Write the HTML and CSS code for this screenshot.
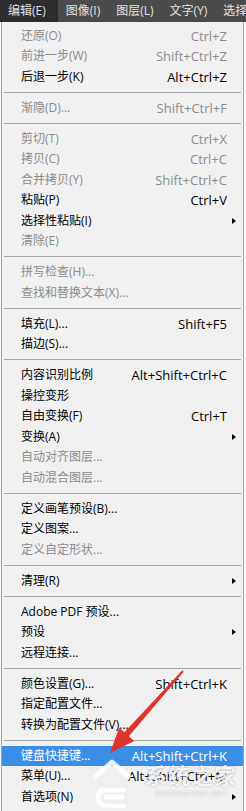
FILE: index.html
```html
<!DOCTYPE html>
<html lang="zh-CN">
<head>
  <meta charset="UTF-8" />
  <title>编辑菜单</title>
  <link rel="stylesheet" href="styles.css">
</head>
<body>
  <div class="menubar">
    <span class="active">编辑(E)</span>
    <span>图像(I)</span>
    <span>图层(L)</span>
    <span>文字(Y)</span>
    <span>选择</span>
  </div>

  <div class="menu">
    <div class="item dis"><span>还原(O)</span><span class="key">Ctrl+Z</span></div>
    <div class="item dis"><span>前进一步(W)</span><span class="key">Shift+Ctrl+Z</span></div>
    <div class="item"><span>后退一步(K)</span><span class="key">Alt+Ctrl+Z</span></div>
    <div class="sep"></div>
    <div class="item dis"><span>渐隐(D)...</span><span class="key">Shift+Ctrl+F</span></div>
    <div class="sep"></div>
    <div class="item dis"><span>剪切(T)</span><span class="key">Ctrl+X</span></div>
    <div class="item dis"><span>拷贝(C)</span><span class="key">Ctrl+C</span></div>
    <div class="item dis"><span>合并拷贝(Y)</span><span class="key">Shift+Ctrl+C</span></div>
    <div class="item"><span>粘贴(P)</span><span class="key">Ctrl+V</span></div>
    <div class="item"><span>选择性粘贴(I)</span><span class="key"></span><i class="arrow"></i></div>
    <div class="item dis"><span>清除(E)</span></div>
    <div class="sep"></div>
    <div class="item dis"><span>拼写检查(H)...</span></div>
    <div class="item dis"><span>查找和替换文本(X)...</span></div>
    <div class="sep"></div>
    <div class="item"><span>填充(L)...</span><span class="key">Shift+F5</span></div>
    <div class="item"><span>描边(S)...</span></div>
    <div class="sep"></div>
    <div class="item"><span>内容识别比例</span><span class="key">Alt+Shift+Ctrl+C</span></div>
    <div class="item"><span>操控变形</span></div>
    <div class="item"><span>自由变换(F)</span><span class="key">Ctrl+T</span></div>
    <div class="item"><span>变换(A)</span><span class="key"></span><i class="arrow"></i></div>
    <div class="item dis"><span>自动对齐图层...</span></div>
    <div class="item dis"><span>自动混合图层...</span></div>
    <div class="sep"></div>
    <div class="item"><span>定义画笔预设(B)...</span></div>
    <div class="item"><span>定义图案...</span></div>
    <div class="item dis"><span>定义自定形状...</span></div>
    <div class="sep"></div>
    <div class="item"><span>清理(R)</span><span class="key"></span><i class="arrow"></i></div>
    <div class="sep"></div>
    <div class="item"><span>Adobe PDF 预设...</span></div>
    <div class="item"><span>预设</span><span class="key"></span><i class="arrow"></i></div>
    <div class="item"><span>远程连接...</span></div>
    <div class="sep"></div>
    <div class="item"><span>颜色设置(G)...</span><span class="key">Shift+Ctrl+K</span></div>
    <div class="item"><span>指定配置文件...</span></div>
    <div class="item"><span>转换为配置文件(V)...</span></div>
    <div class="sep"></div>
    <div class="item hot"><span>键盘快捷键...</span><span class="key">Alt+Shift+Ctrl+K</span></div>
    <div class="item"><span>菜单(U)...</span><span class="key">Alt+Shift+Ctrl+M</span></div>
    <div class="item"><span>首选项(N)</span><span class="key"></span><i class="arrow"></i></div>
  </div>

  <!-- red pointer arrow and site watermark drawn over the menu -->
  <svg class="overlay" width="246" height="811" viewBox="0 0 246 811">
    <defs>
      <linearGradient id="red" x1="0" y1="0" x2="1" y2="1">
        <stop offset="0" stop-color="#f04a3c"/>
        <stop offset="1" stop-color="#c8201a"/>
      </linearGradient>
    </defs>
    <polygon fill="url(#red)"
      points="182.3,670.3 124.4,732.3 119.1,727.7 110,753 134.1,741 128.8,736.3 183.7,671.7"/>
    <g fill="none" stroke="#fff" stroke-opacity="0.85" stroke-width="5" stroke-linejoin="round">
      <polyline points="94,778 112,762 130,778"/>
      <path d="M126 790 H104 Q98 790 98 797 Q98 806 108 806 H126"/>
      <path d="M104 797 H124"/>
    </g>
  </svg>
  <div class="watermark">
    <span class="wm-name">系统之家</span>
    <span class="wm-url">XITONGZHIJIA.NET</span>
  </div>
</body>
</html>
```

FILE: styles.css
```css
/* Photoshop style "Edit" drop-down menu */
body {
  margin: 0;
  width: 246px;
  height: 811px;
  overflow: hidden;
  position: relative;
  background: #fafafa;
  font-family: "Open Sans", "Noto Sans CJK SC", "Microsoft YaHei", sans-serif;
  font-size: 12px;
}
.menubar {
  display: flex;
  height: 22px;
  line-height: 22px;
  background: #4b4b4b;
  color: #e2e2e2;
  white-space: nowrap;
  overflow: hidden;
}
.menubar span {
  padding: 0 8px;
}
.menubar .active {
  background: #2d2d2d;
  padding-right: 12px;
}
.menu {
  margin: 0 2px 0 1px;
  padding-top: 3.5px;
  border: 1px solid #a3a3a3;
  border-top: 0;
  background: #f0f0f0;
  height: 811px;
}
.item {
  display: grid;
  grid-template-columns: 1fr auto 16px;
  height: 20.5px;
  line-height: 20.5px;
  padding-left: 19px;
  color: #000;
  white-space: nowrap;
}
.item.dis {
  color: #8c8c8c;
}
.item .key {
  text-align: right;
  font-size: 13px;
}
.item .arrow {
  width: 0;
  height: 0;
  margin-left: 5px;
  align-self: center;
  border-left: 4px solid #000;
  border-top: 3.5px solid transparent;
  border-bottom: 3.5px solid transparent;
}
.item.hot {
  background: #3a8ee6;
  color: #fff;
}
.sep {
  height: 1px;
  margin: 4.5px 2px 5px;
  background: #a6a6a6;
}
.overlay {
  position: absolute;
  top: 0;
  left: 0;
  pointer-events: none;
}
.watermark {
  position: absolute;
  left: 140px;
  top: 762px;
  width: 102px;
  display: flex;
  flex-direction: column;
  align-items: center;
  color: rgba(255, 255, 255, 0.9);
  text-shadow: 0 0 2px rgba(0, 0, 0, 0.35);
  pointer-events: none;
}
.wm-name {
  font-size: 22px;
  font-weight: bold;
  line-height: 26px;
  letter-spacing: 1px;
}
.wm-url {
  font-family: "DejaVu Sans", sans-serif;
  font-size: 7px;
  line-height: 12px;
  letter-spacing: 0.5px;
}
```
